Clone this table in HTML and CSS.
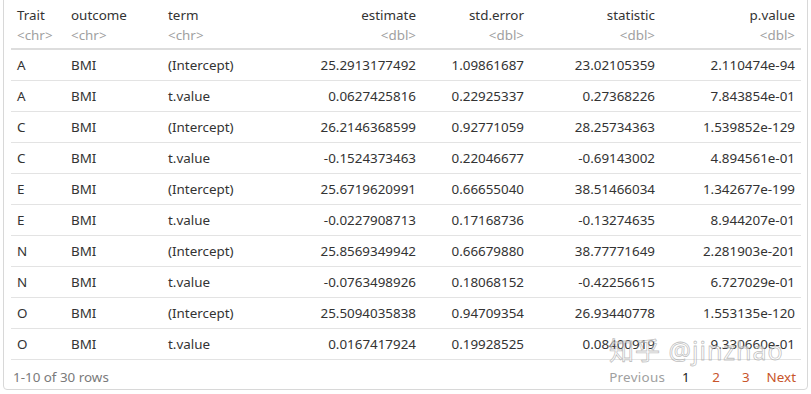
FILE: index.html
```html
<!DOCTYPE html>
<html>
<head>
<meta charset="utf-8">
<link rel="stylesheet" href="styles.css">
</head>
<body>
<div class="frame">
  <table class="tbl">
    <colgroup>
      <col class="c1"><col class="c2"><col class="c3"><col class="c4"><col class="c5"><col class="c6"><col class="c7">
    </colgroup>
    <thead>
      <tr>
        <th class="l"><div class="name">Trait</div><div class="type">&lt;chr&gt;</div></th>
        <th class="l"><div class="name">outcome</div><div class="type">&lt;chr&gt;</div></th>
        <th class="l"><div class="name">term</div><div class="type">&lt;chr&gt;</div></th>
        <th class="r"><div class="name">estimate</div><div class="type">&lt;dbl&gt;</div></th>
        <th class="r"><div class="name">std.error</div><div class="type">&lt;dbl&gt;</div></th>
        <th class="r"><div class="name">statistic</div><div class="type">&lt;dbl&gt;</div></th>
        <th class="r"><div class="name">p.value</div><div class="type">&lt;dbl&gt;</div></th>
      </tr>
    </thead>
    <tbody>
      <tr><td>A</td><td>BMI</td><td>(Intercept)</td><td class="r">25.2913177492</td><td class="r">1.09861687</td><td class="r">23.02105359</td><td class="r">2.110474e-94</td></tr>
      <tr><td>A</td><td>BMI</td><td>t.value</td><td class="r">0.0627425816</td><td class="r">0.22925337</td><td class="r">0.27368226</td><td class="r">7.843854e-01</td></tr>
      <tr><td>C</td><td>BMI</td><td>(Intercept)</td><td class="r">26.2146368599</td><td class="r">0.92771059</td><td class="r">28.25734363</td><td class="r">1.539852e-129</td></tr>
      <tr><td>C</td><td>BMI</td><td>t.value</td><td class="r">-0.1524373463</td><td class="r">0.22046677</td><td class="r">-0.69143002</td><td class="r">4.894561e-01</td></tr>
      <tr><td>E</td><td>BMI</td><td>(Intercept)</td><td class="r">25.6719620991</td><td class="r">0.66655040</td><td class="r">38.51466034</td><td class="r">1.342677e-199</td></tr>
      <tr><td>E</td><td>BMI</td><td>t.value</td><td class="r">-0.0227908713</td><td class="r">0.17168736</td><td class="r">-0.13274635</td><td class="r">8.944207e-01</td></tr>
      <tr><td>N</td><td>BMI</td><td>(Intercept)</td><td class="r">25.8569349942</td><td class="r">0.66679880</td><td class="r">38.77771649</td><td class="r">2.281903e-201</td></tr>
      <tr><td>N</td><td>BMI</td><td>t.value</td><td class="r">-0.0763498926</td><td class="r">0.18068152</td><td class="r">-0.42256615</td><td class="r">6.727029e-01</td></tr>
      <tr><td>O</td><td>BMI</td><td>(Intercept)</td><td class="r">25.5094035838</td><td class="r">0.94709354</td><td class="r">26.93440778</td><td class="r">1.553135e-120</td></tr>
      <tr><td>O</td><td>BMI</td><td>t.value</td><td class="r">0.0167417924</td><td class="r">0.19928525</td><td class="r">0.08400919</td><td class="r">9.330660e-01</td></tr>
    </tbody>
  </table>
  <div class="footer">
    <span class="info">1-10 of 30 rows</span>
    <span class="pager">
      <span class="prev">Previous</span>
      <span class="cur">1</span>
      <span class="pg">2</span>
      <span class="pg">3</span>
      <span class="pg next">Next</span>
    </span>
  </div>
  <div class="watermark">知乎 @jinzhao</div>
</div>
</body>
</html>
```
FILE: styles.css
```css
html, body {
  margin: 0;
  padding: 0;
  background: #ffffff;
}
body {
  font-family: "Noto Sans", "Open Sans", "Noto Sans CJK SC", sans-serif;
  font-size: 13.4px;
  color: #333333;
}
.frame {
  position: relative;
  margin: -4px 3px 0 3px;
  height: 394px;
  box-sizing: border-box;
  border: 1px solid #d8d8d8;
  border-radius: 4px;
  padding: 4px 7px 0 7px;
}
.tbl {
  width: 790px;
  border-collapse: collapse;
  table-layout: fixed;
}
.c1 { width: 54px; }
.c2 { width: 97px; }
.c3 { width: 130px; }
.c4 { width: 130px; }
.c5 { width: 108px; }
.c6 { width: 131px; }
.c7 { width: 140px; }
th {
  font-weight: normal;
  padding: 0 6px;
  height: 48px;
  box-sizing: border-box;
  border-bottom: 2px solid #dddddd;
  vertical-align: middle;
}
th.l { text-align: left; }
th.r { text-align: right; }
.name { line-height: 20px; color: #333; }
.type { line-height: 20px; color: #a0a0a0; }
td {
  height: 30px;
  padding: 0 6px;
  border-bottom: 1px solid #e3e3e3;
  white-space: nowrap;
  vertical-align: middle;
}
td.r { text-align: right; }
.footer {
  display: flex;
  justify-content: space-between;
  align-items: center;
  height: 33px;
  padding: 0 4px 0 2px;
}
.info { color: #7a7a7a; }
.pager { display: flex; align-items: center; }
.pager .prev { color: #a0a0a0; letter-spacing: 0.3px; }
.pager .cur { color: #222222; margin-left: 16px; display: inline-block; width: 9px; text-align: center; }
.pager .pg { color: #c8552b; margin-left: 22px; }
.pager .next { margin-left: 17px; }
.watermark {
  position: absolute;
  left: 605px;
  top: 338px;
  font-size: 25px;
  line-height: 30px;
  letter-spacing: 1px;
  color: rgba(255, 255, 255, 0.55);
  -webkit-text-stroke: 0.8px rgba(150, 150, 150, 0.6);
  white-space: nowrap;
  pointer-events: none;
}
```
